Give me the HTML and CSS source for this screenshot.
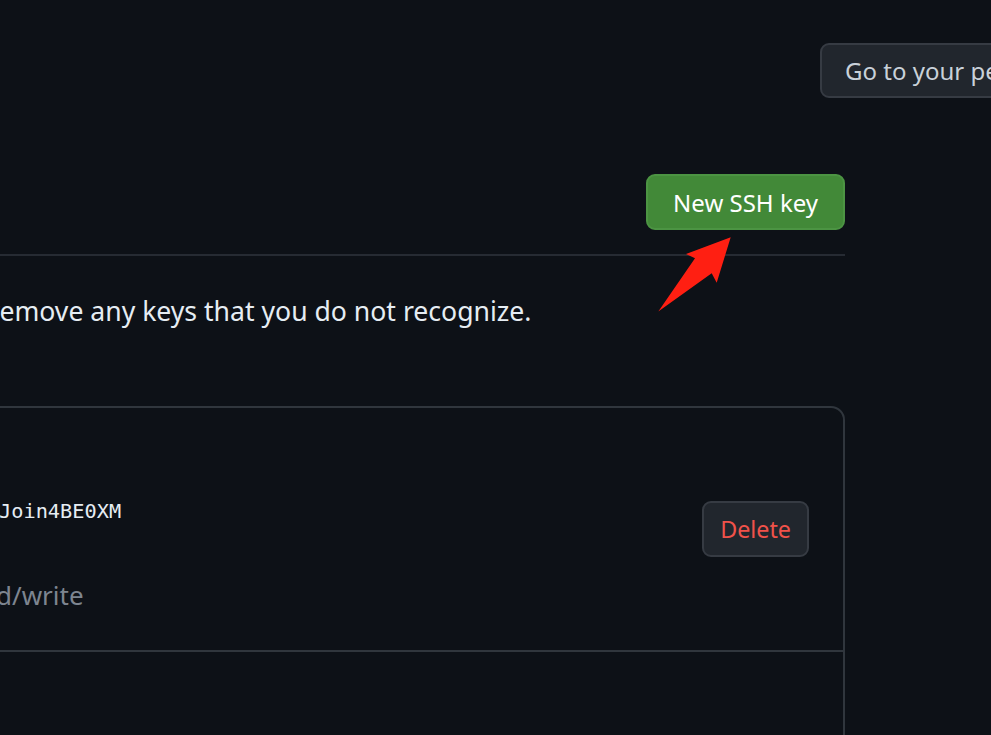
FILE: index.html
```html
<!DOCTYPE html>
<html>
<head>
<meta charset="utf-8">
<link rel="stylesheet" href="styles.css">
</head>
<body>
<div class="topbar">
  <button class="btn btn-default">Go to your personal profile</button>
</div>
<main class="content">
  <div class="subhead">
    <button class="btn btn-primary">New SSH key</button>
  </div>
  <p class="desc">remove any keys that you do not recognize.</p>
  <div class="box">
    <div class="row">
      <div class="key-info">
        <code class="fingerprint">Join4BE0XM</code>
        <span class="access">d/write</span>
      </div>
      <button class="btn btn-danger">Delete</button>
    </div>
    <div class="row row-empty"></div>
  </div>
</main>
<svg class="arrow" width="991" height="735" viewBox="0 0 991 735">
  <polygon points="730.7,237.3 716.7,282.7 711.7,273.3 658.3,311.5 695,258.3 686,254" fill="#ff1f12"/>
</svg>
</body>
</html>
```
FILE: styles.css
```css
html, body {
  margin: 0;
  padding: 0;
  background: #0d1117;
  height: 735px;
  overflow: hidden;
  font-family: "Noto Sans", "Open Sans", sans-serif;
  color: #e6edf3;
}
.topbar {
  padding: 43px 0 0 820px;
  white-space: nowrap;
  display: flex;
}
.btn {
  font-family: "Noto Sans", "Open Sans", sans-serif;
  font-size: 24px;
  height: 56px;
  padding: 0 25px;
  border-radius: 9px;
  display: inline-flex;
  align-items: center;
  white-space: nowrap;
  box-sizing: border-box;
  cursor: pointer;
}
.btn-default {
  height: 55px;
  padding-left: 23px;
  background: #21262d;
  border: 2px solid #363b43;
  color: #c9d1d9;
  flex-shrink: 0;
}
.btn-primary {
  background: #428938;
  border: 2px solid #4c9443;
  color: #ffffff;
}
.btn-danger {
  height: 56px;
  padding: 0 16px;
  font-size: 23.3px;
  background: #21262d;
  border: 2px solid #363b43;
  color: #f0524a;
}
.content {
  width: 845px;
}
.subhead {
  margin-top: 76px;
  display: flex;
  justify-content: flex-end;
  padding-bottom: 24px;
  border-bottom: 2px solid #262b33;
}
.desc {
  margin: 35px 0 0 -11px;
  font-size: 26.6px;
  line-height: 40px;
  white-space: nowrap;
}
.box {
  margin: 75px 0 0 -40px;
  border: 2px solid #30363d;
  border-radius: 14px;
  height: 400px;
}
.row {
  display: flex;
  align-items: center;
  justify-content: space-between;
  padding: 0 34px 0 37px;
  height: 244px;
  box-sizing: border-box;
  border-bottom: 2px solid #30363d;
}
.row-empty {
  border-bottom: none;
}
.key-info {
  align-self: flex-start;
  display: flex;
  flex-direction: column;
  padding-top: 88px;
}
.fingerprint {
  font-family: "DejaVu Sans Mono", monospace;
  font-size: 20.3px;
  line-height: 30px;
  color: #e6edf3;
}
.access {
  margin: 52px 0 0 -3px;
  font-size: 26px;
  line-height: 34px;
  color: #7d8590;
}
.arrow {
  position: absolute;
  left: 0;
  top: 0;
  pointer-events: none;
}
```
